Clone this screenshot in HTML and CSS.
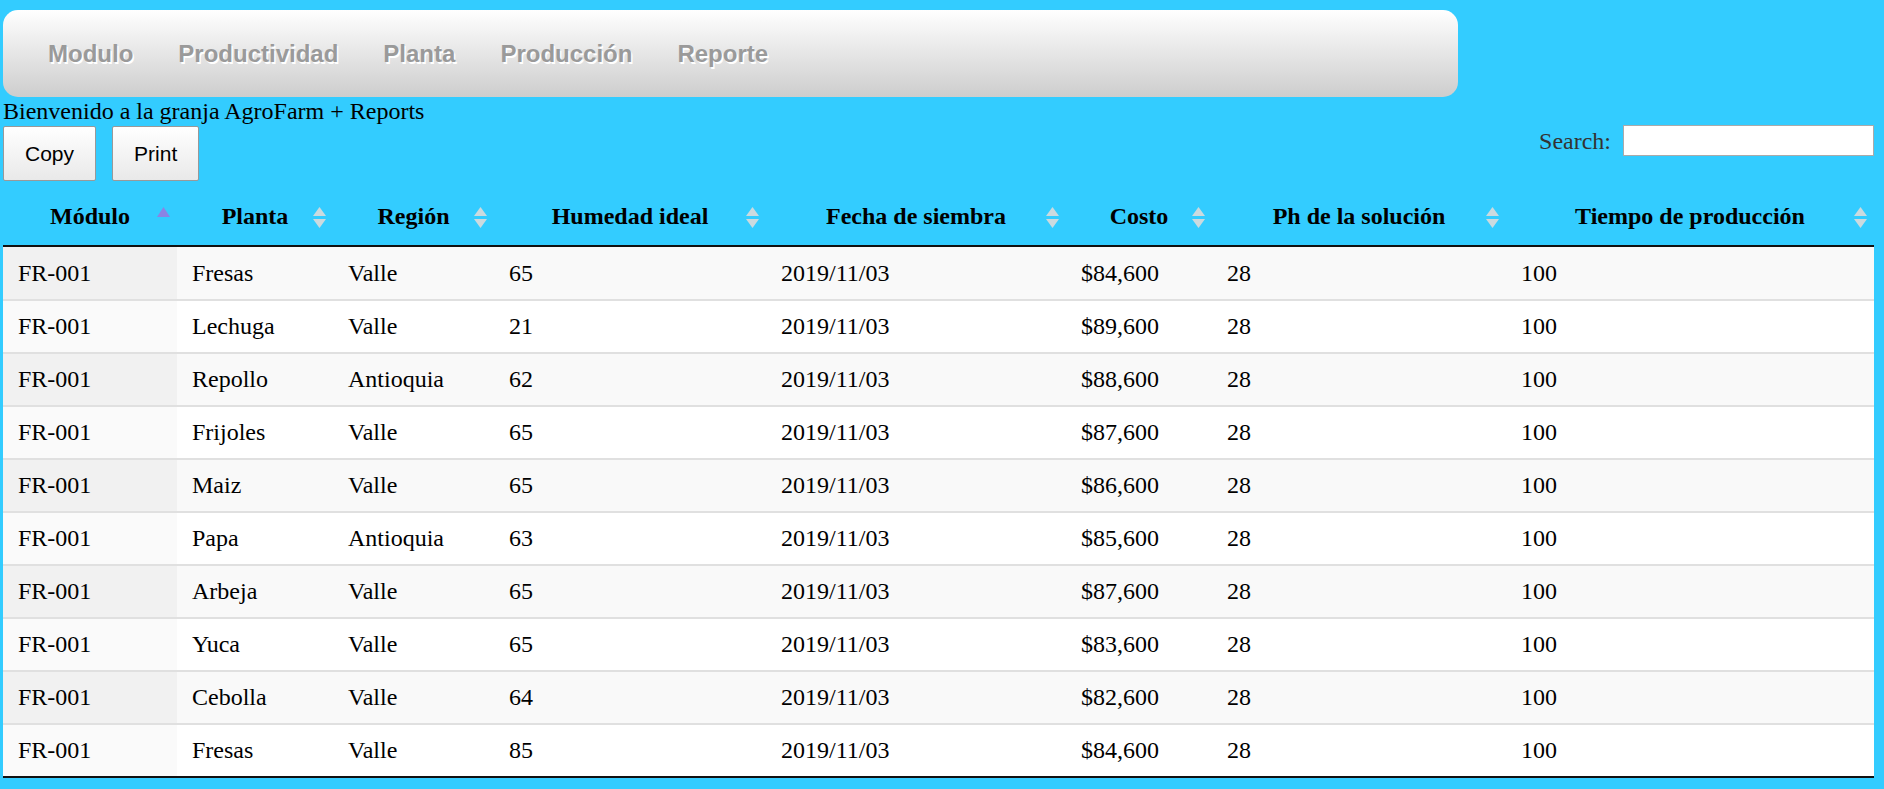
FILE: index.html
```html
<!DOCTYPE html>
<html lang="es">
<head>
<meta charset="utf-8">
<title>AgroFarm Reports</title>
<link rel="stylesheet" href="styles.css">
</head>
<body>
<nav class="navbar">
  <ul class="nav-list">
    <li><a class="nav-link">Modulo</a></li>
    <li><a class="nav-link">Productividad</a></li>
    <li><a class="nav-link">Planta</a></li>
    <li><a class="nav-link">Producción</a></li>
    <li><a class="nav-link">Reporte</a></li>
  </ul>
</nav>
<p class="welcome">Bienvenido a la granja AgroFarm + Reports</p>
<div class="controls">
  <div class="dt-buttons">
    <button class="dt-button">Copy</button>
    <button class="dt-button">Print</button>
  </div>
  <label class="dt-filter">Search:<input class="dt-search" type="search"></label>
</div>
<table class="data-table">
  <colgroup>
    <col class="w1"><col class="w2"><col class="w3"><col class="w4"><col class="w5"><col class="w6"><col class="w7"><col class="w8">
  </colgroup>
  <thead>
    <tr>
      <th>Módulo<span class="sort"><svg width="13" height="21" viewBox="0 0 13 21"><polygon points="6.5,0 13,10 0,10" fill="#8b84e4"/></svg></span></th>
      <th>Planta<span class="sort"><svg width="13" height="21" viewBox="0 0 13 21"><polygon points="6.5,0 13,9 0,9" class="tri"/><polygon points="0,12 13,12 6.5,21" class="tri"/></svg></span></th>
      <th>Región<span class="sort"><svg width="13" height="21" viewBox="0 0 13 21"><polygon points="6.5,0 13,9 0,9" class="tri"/><polygon points="0,12 13,12 6.5,21" class="tri"/></svg></span></th>
      <th>Humedad ideal<span class="sort"><svg width="13" height="21" viewBox="0 0 13 21"><polygon points="6.5,0 13,9 0,9" class="tri"/><polygon points="0,12 13,12 6.5,21" class="tri"/></svg></span></th>
      <th>Fecha de siembra<span class="sort"><svg width="13" height="21" viewBox="0 0 13 21"><polygon points="6.5,0 13,9 0,9" class="tri"/><polygon points="0,12 13,12 6.5,21" class="tri"/></svg></span></th>
      <th>Costo<span class="sort"><svg width="13" height="21" viewBox="0 0 13 21"><polygon points="6.5,0 13,9 0,9" class="tri"/><polygon points="0,12 13,12 6.5,21" class="tri"/></svg></span></th>
      <th>Ph de la solución<span class="sort"><svg width="13" height="21" viewBox="0 0 13 21"><polygon points="6.5,0 13,9 0,9" class="tri"/><polygon points="0,12 13,12 6.5,21" class="tri"/></svg></span></th>
      <th>Tiempo de producción<span class="sort"><svg width="13" height="21" viewBox="0 0 13 21"><polygon points="6.5,0 13,9 0,9" class="tri"/><polygon points="0,12 13,12 6.5,21" class="tri"/></svg></span></th>
    </tr>
  </thead>
  <tbody>
    <tr class="odd"><td class="sorted">FR-001</td><td>Fresas</td><td>Valle</td><td>65</td><td>2019/11/03</td><td>$84,600</td><td>28</td><td>100</td></tr>
    <tr class="even"><td class="sorted">FR-001</td><td>Lechuga</td><td>Valle</td><td>21</td><td>2019/11/03</td><td>$89,600</td><td>28</td><td>100</td></tr>
    <tr class="odd"><td class="sorted">FR-001</td><td>Repollo</td><td>Antioquia</td><td>62</td><td>2019/11/03</td><td>$88,600</td><td>28</td><td>100</td></tr>
    <tr class="even"><td class="sorted">FR-001</td><td>Frijoles</td><td>Valle</td><td>65</td><td>2019/11/03</td><td>$87,600</td><td>28</td><td>100</td></tr>
    <tr class="odd"><td class="sorted">FR-001</td><td>Maiz</td><td>Valle</td><td>65</td><td>2019/11/03</td><td>$86,600</td><td>28</td><td>100</td></tr>
    <tr class="even"><td class="sorted">FR-001</td><td>Papa</td><td>Antioquia</td><td>63</td><td>2019/11/03</td><td>$85,600</td><td>28</td><td>100</td></tr>
    <tr class="odd"><td class="sorted">FR-001</td><td>Arbeja</td><td>Valle</td><td>65</td><td>2019/11/03</td><td>$87,600</td><td>28</td><td>100</td></tr>
    <tr class="even"><td class="sorted">FR-001</td><td>Yuca</td><td>Valle</td><td>65</td><td>2019/11/03</td><td>$83,600</td><td>28</td><td>100</td></tr>
    <tr class="odd"><td class="sorted">FR-001</td><td>Cebolla</td><td>Valle</td><td>64</td><td>2019/11/03</td><td>$82,600</td><td>28</td><td>100</td></tr>
    <tr class="even"><td class="sorted">FR-001</td><td>Fresas</td><td>Valle</td><td>85</td><td>2019/11/03</td><td>$84,600</td><td>28</td><td>100</td></tr>
  </tbody>
</table>
</body>
</html>
```
FILE: styles.css
```css
html, body {
  background: #33ccff;
}
body {
  margin: 0;
  padding: 10px 10px 0 3px;
  font-family: "Liberation Serif", "Times New Roman", serif;
  font-size: 24px;
  color: #000;
}

.navbar {
  width: 1455px;
  height: 87px;
  border-radius: 15px;
  background: linear-gradient(to bottom, #ffffff 0%, #cdcdcd 100%);
}
.nav-list {
  list-style: none;
  margin: 0;
  padding: 0 0 0 45px;
  height: 100%;
  display: flex;
  align-items: center;
  gap: 45px;
}
.nav-link {
  font-family: "Liberation Sans", Arial, sans-serif;
  font-weight: bold;
  font-size: 24px;
  color: #9a9a9a;
  text-shadow: 1.5px 1.5px 0 #ffffff;
  cursor: pointer;
}

.welcome {
  margin: 0;
  line-height: 28px;
}

.controls {
  display: flex;
  justify-content: space-between;
  align-items: flex-start;
  margin-top: 1px;
}
.dt-buttons {
  display: flex;
  gap: 16px;
}
.dt-button {
  font-family: "Liberation Sans", Arial, sans-serif;
  font-size: 21px;
  line-height: 33px;
  padding: 10px 21px;
  border: 1px solid #999;
  border-radius: 2px;
  background: linear-gradient(to bottom, #ffffff 0%, #e9e9e9 100%);
  color: #000;
  margin: 0;
}
.dt-filter {
  display: flex;
  align-items: center;
  color: #333;
  margin-top: -1px;
  line-height: 28px;
}
.dt-search {
  width: 251px;
  height: 31px;
  box-sizing: border-box;
  margin: 0 0 0 12px;
  padding: 0 4px;
  border: 1px solid #aaa;
  background: #fff;
}

.data-table {
  width: 100%;
  margin-top: 6px;
  table-layout: fixed;
  border-collapse: separate;
  border-spacing: 0;
  border-bottom: 2px solid #111;
}
.w1 { width: 174px; }
.w2 { width: 156px; }
.w3 { width: 161px; }
.w4 { width: 272px; }
.w5 { width: 300px; }
.w6 { width: 146px; }
.w7 { width: 294px; }
.w8 { width: 368px; }

.data-table th {
  position: relative;
  padding: 15px 27px 15px;
  line-height: 28px;
  font-weight: bold;
  text-align: center;
  white-space: nowrap;
  border-bottom: 2px solid #111;
}
.sort {
  position: absolute;
  right: 7px;
  top: calc(50% - 9px);
  line-height: 0;
}
.tri {
  fill: #dcdcdc;
  fill-opacity: 0.9;
}

.data-table td {
  padding: 11px 15px 12px;
  line-height: 28px;
  text-align: left;
  border-top: 2px solid #e0e0e0;
  white-space: nowrap;
}
.data-table tbody tr:first-child td {
  border-top: none;
  padding-top: 12px;
}
.odd { background: #f9f9f9; }
.even { background: #ffffff; }
.odd .sorted { background: #f1f1f1; }
.even .sorted { background: #fafafa; }
```
